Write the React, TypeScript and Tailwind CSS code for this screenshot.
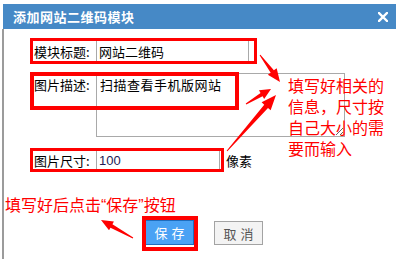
import React from 'react';

const cjk = { fontFamily: '"Noto Sans CJK SC", "Liberation Sans", sans-serif' };

// tapered red arrow: thin at the tail, wide head at the tip
function arrowPoints(x1: number, y1: number, x2: number, y2: number, head = 12, headW = 6, shaftW = 2.5) {
  const dx = x2 - x1;
  const dy = y2 - y1;
  const len = Math.hypot(dx, dy);
  const ux = dx / len;
  const uy = dy / len;
  const nx = -uy;
  const ny = ux;
  const bx = x2 - ux * head;
  const by = y2 - uy * head;
  const pts = [
    [x1 + nx * 0.5, y1 + ny * 0.5],
    [bx + nx * shaftW, by + ny * shaftW],
    [bx + nx * headW, by + ny * headW],
    [x2, y2],
    [bx - nx * headW, by - ny * headW],
    [bx - nx * shaftW, by - ny * shaftW],
    [x1 - nx * 0.5, y1 - ny * 0.5],
  ];
  return pts.map((p) => p.join(',')).join(' ');
}

const arrows = [
  { x1: 260, y1: 55, x2: 280, y2: 82, head: 13, headW: 5.5, shaftW: 2 },
  { x1: 246, y1: 104, x2: 271, y2: 89, head: 11, headW: 5, shaftW: 2 },
  { x1: 227, y1: 151, x2: 276, y2: 95, head: 15, headW: 6, shaftW: 2.5 },
  { x1: 133, y1: 238, x2: 101, y2: 220, head: 12, headW: 5, shaftW: 2 },
];

const latin = { fontFamily: '"Liberation Sans", sans-serif' };

export default function App() {
  return (
    <div className="relative w-[402px] h-[259px] bg-white overflow-hidden pt-[4px] text-black" style={cjk}>
      {/* title bar */}
      <div className="ml-[3px] w-[393px] h-[25px] bg-[#4689c6] flex items-center justify-between pl-[10px] pr-[8px]">
        <span className="text-white text-[13px] font-bold leading-none tracking-[0.5px]">添加网站二维码模块</span>
        <svg width="10" height="10" viewBox="0 0 10 10">
          <path d="M1 1 L9 9 M9 1 L1 9" stroke="#fff" strokeWidth="2.4" strokeLinecap="square" />
        </svg>
      </div>

      {/* body */}
      <div className="ml-[2px] h-[230px] border-l-2 border-[#9b9b9b]">
        <div className="pl-[30px] pt-[11px] text-[13px]">
          <div className="flex items-center h-[22px]">
            <span className="w-[62px] leading-none">模块标题:</span>
            <input
              readOnly
              value="网站二维码"
              className="w-[153px] h-[22px] border border-[#a9a9a9] px-[2px] text-[13px] outline-none"
            />
          </div>
          <div className="flex items-start mt-[11px]">
            <span className="w-[62px] pt-[5px] leading-none">图片描述:</span>
            <textarea
              readOnly
              defaultValue="扫描查看手机版网站"
              className="w-[249px] h-[64px] border border-[#a9a9a9] px-[3px] py-[3px] text-[13px] tracking-[0.5px] leading-[16px] outline-none"
            />
          </div>
          <div className="flex items-center mt-[13px] h-[20px]">
            <span className="w-[62px] leading-none">图片尺寸:</span>
            <input
              readOnly
              value="100"
              className="w-[124px] h-[20px] border border-[#a9a9a9] px-[2px] text-[13px] text-[#221a55] outline-none"
              style={latin}
            />
            <span className="ml-[6px] leading-none">像素</span>
          </div>
        </div>

        <div className="mt-[24px] pl-[1px] h-[20px] text-[16px] leading-[20px] text-[#ff0000]">
          填写好后点击<span style={latin}>“</span>保存<span style={latin}>”</span>按钮
        </div>

        <div className="mt-[6px] pl-[141px] flex items-start gap-[20px]">
          <button className="w-[49px] h-[25px] bg-[#4aa2f4] border border-[#1f6cbc] text-white text-[13px] tracking-[4px] pl-[4px] leading-none">
            保存
          </button>
          <button className="mt-[1px] w-[49px] h-[24px] bg-[#f3f3f3] border border-[#a3a3a3] text-[#555] text-[13px] tracking-[4px] pl-[4px] leading-none">
            取消
          </button>
        </div>
      </div>

      {/* annotation: red boxes */}
      <div className="absolute left-[30px] top-[38px] w-[227px] h-[26px] border-[3px] border-[#ff0000]" />
      <div className="absolute left-[30px] top-[72px] w-[209px] h-[38px] border-[4px] border-[#ff0000]" />
      <div className="absolute left-[30px] top-[148px] w-[194px] h-[24px] border-[3px] border-[#ff0000]" />
      <div className="absolute left-[142px] top-[216px] w-[56px] h-[35px] border-[4px] border-[#ff0000]" />

      {/* annotation: note on the right */}
      <div className="absolute left-[288px] top-[75px] text-[16px] leading-[21px] text-[#ff0000]">
        <div>填写好相关的</div>
        <div>信息，尺寸按</div>
        <div>自己大小的需</div>
        <div>要而输入</div>
      </div>

      {/* annotation: arrows */}
      <svg className="absolute inset-0 pointer-events-none" width="402" height="259">
        {arrows.map((a, i) => (
          <polygon key={i} points={arrowPoints(a.x1, a.y1, a.x2, a.y2, a.head, a.headW, a.shaftW)} fill="#ff0000" />
        ))}
      </svg>
    </div>
  );
}
